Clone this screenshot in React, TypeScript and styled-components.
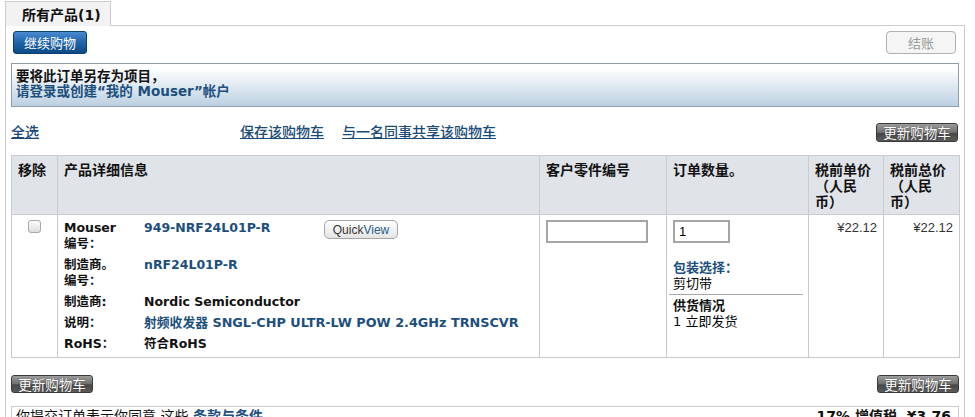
import styled, { createGlobalStyle } from 'styled-components'

const GlobalStyle = createGlobalStyle`
	* {
		box-sizing: border-box;
	}
	html,
	body {
		margin: 0;
		padding: 0;
		background: #fff;
	}
	body {
		font-family: 'DejaVu Sans', 'Noto Sans CJK SC', sans-serif;
		color: #000;
	}
`

const details = [
	{ label: <>Mouser<br />编号：</>, value: '949-NRF24L01P-R', link: true, quick: true },
	{ label: <>制造商。<br />编号：</>, value: 'nRF24L01P-R', link: true },
	{ label: '制造商:', value: 'Nordic Semiconductor' },
	{ label: '说明：', value: '射频收发器 SNGL-CHP ULTR-LW POW 2.4GHz TRNSCVR', link: true, wide: true },
	{ label: 'RoHS：', value: '符合RoHS', wide: true },
]

export default function App() {
	return (
		<Page>
			<GlobalStyle />
			<Tabs>
				<Tab>所有产品(1)</Tab>
				<TabRest />
			</Tabs>

			<Panel>
				<TopBar>
					<BlueButton type="button">继续购物</BlueButton>
					<CheckoutButton type="button">结账</CheckoutButton>
				</TopBar>

				<Notice>
					<div>要将此订单另存为项目，</div>
					<NoticeLink>请登录或创建“我的 Mouser”帐户</NoticeLink>
				</Notice>

				<ActionRow>
					<SelectAll>全选</SelectAll>
					<TextLink>保存该购物车</TextLink>
					<TextLink>与一名同事共享该购物车</TextLink>
					<Spacer />
					<UpdateButton type="button">更新购物车</UpdateButton>
				</ActionRow>

				<CartTable>
					<colgroup>
						<col style={{ width: 46 }} />
						<col style={{ width: 482 }} />
						<col style={{ width: 127 }} />
						<col style={{ width: 142 }} />
						<col style={{ width: 75 }} />
						<col style={{ width: 76 }} />
					</colgroup>
					<thead>
						<tr>
							<Th>移除</Th>
							<Th>产品详细信息</Th>
							<Th>客户零件编号</Th>
							<Th>订单数量。</Th>
							<Th $narrow>税前单价（人民币）</Th>
							<Th $narrow>税前总价（人民币）</Th>
						</tr>
					</thead>
					<tbody>
						<tr>
							<Td $center>
								<CheckBox type="checkbox" />
							</Td>
							<Td>
								<DetailGrid>
									{details.map((d, i) => (
										<DetailRow key={i}>
											<DetailLabel>{d.label}</DetailLabel>
											<DetailValue $link={!!d.link} $wide={!!d.wide}>
												{d.value}
											</DetailValue>
											{d.quick && (
												<div>
													<QuickView type="button">
														Quick<span>View</span>
													</QuickView>
												</div>
											)}
										</DetailRow>
									))}
								</DetailGrid>
							</Td>
							<Td>
								<PartInput />
							</Td>
							<Td>
								<QtyInput defaultValue="1" />
								<PackTitle>包装选择：</PackTitle>
								<Plain>剪切带</Plain>
								<Divider />
								<StockTitle>供货情况</StockTitle>
								<Plain>1 立即发货</Plain>
							</Td>
							<Td $price>¥22.12</Td>
							<Td $price>¥22.12</Td>
						</tr>
					</tbody>
				</CartTable>

				<BottomBar>
					<UpdateButton type="button" $small>
						更新购物车
					</UpdateButton>
					<UpdateButton type="button" $small>
						更新购物车
					</UpdateButton>
				</BottomBar>

				<Terms>
					<span>
						你提交订单表示你同意 这些 <TermsLink>条款与条件</TermsLink>
					</span>
					<Tax>17% 增值税 &nbsp;¥3.76</Tax>
				</Terms>
			</Panel>
		</Page>
	)
}

const Page = styled.div`
	width: 975px;
	padding: 1px 10px 0 5px;
`

const Tabs = styled.div`
	display: flex;
	height: 25px;
`

const Tab = styled.div`
	width: 106px;
	height: 25px;
	padding-left: 16px;
	background: #f2f2f2;
	border: 1px solid #cccccc;
	border-bottom: none;
	font-size: 14px;
	font-weight: bold;
	line-height: 26px;
	color: #111;
`

const TabRest = styled.div`
	flex: 1;
	border-bottom: 1px solid #cccccc;
`

const Panel = styled.div`
	width: 960px;
	padding: 5px 5px 0 5px;
	border: 1px solid #cccccc;
	border-top: none;
`

const TopBar = styled.div`
	display: flex;
	justify-content: space-between;
	height: 23px;
`

const BlueButton = styled.button`
	width: 74px;
	height: 23px;
	padding: 0;
	margin-left: 2px;
	border: 1px solid #0b3e70;
	border-radius: 3px;
	background: linear-gradient(#4a8bd0, #1f63a8 50%, #0c4a86);
	color: #fff;
	font-family: 'Noto Sans CJK SC', sans-serif;
	font-size: 13px;
	line-height: 20px;
`

const CheckoutButton = styled.button`
	width: 70px;
	height: 23px;
	padding: 0;
	margin-right: 3px;
	border: 1px solid #b0b0b0;
	border-radius: 4px;
	background: #f5f5f5;
	color: #9a9a9a;
	font-family: 'Noto Sans CJK SC', sans-serif;
	font-size: 13px;
	line-height: 20px;
`

const Notice = styled.div`
	margin-top: 9px;
	height: 44px;
	padding: 5px 4px 7px;
	border: 1px solid #8e9dab;
	background: linear-gradient(#ffffff 10%, #bcd0e2);
	font-size: 13.5px;
	font-weight: bold;
	line-height: 15px;
	color: #111;
`

const NoticeLink = styled.div`
	color: #1d4f7d;
`

const ActionRow = styled.div`
	display: flex;
	align-items: center;
	margin-top: 16px;
	height: 19px;
`

const TextLink = styled.a`
	margin-right: 18px;
	font-size: 14px;
	font-weight: 500;
	line-height: 19px;
	color: #1a4a78;
	text-decoration: underline;
	cursor: pointer;
`

const SelectAll = styled(TextLink)`
	width: 229px;
	margin-right: 0;
`

const Spacer = styled.div`
	flex: 1;
`

const UpdateButton = styled.button<{ $small?: boolean }>`
	width: 82px;
	height: ${({ $small }) => ($small ? '18px' : '19px')};
	padding: 0;
	margin-right: ${({ $small }) => ($small ? '0' : '1px')};
	border: 1px solid #3a3a3a;
	border-radius: 3px;
	background: linear-gradient(#9c9c9c, #6e6e6e 50%, #474747 55%, #5a5a5a);
	color: #fff;
	font-family: 'Noto Sans CJK SC', sans-serif;
	font-size: 13.5px;
	line-height: 15px;
	text-shadow: 0 0 1px #333;
`

const CartTable = styled.table`
	margin-top: 13px;
	width: 948px;
	table-layout: fixed;
	border-collapse: collapse;
	border: 1px solid #c9c9c9;
`

const Th = styled.th<{ $narrow?: boolean }>`
	padding: ${({ $narrow }) => ($narrow ? '6px 11px 4px 6px' : '6px 6px 4px')};
	background: #e0e3e8;
	border: 1px solid #c9ccd1;
	text-align: left;
	vertical-align: top;
	font-size: 14px;
	font-weight: bold;
	line-height: 16px;
	color: #111;
`

const Td = styled.td<{ $center?: boolean; $price?: boolean }>`
	padding: 5px 6px 5px;
	border: 1px solid #c9c9c9;
	vertical-align: top;
	text-align: ${({ $center, $price }) => ($center ? 'center' : $price ? 'right' : 'left')};
	font-family: ${({ $price }) => ($price ? "'Liberation Sans', sans-serif" : 'inherit')};
	font-size: 13px;
	line-height: 16px;
	color: ${({ $price }) => ($price ? '#333' : '#000')};
`

const CheckBox = styled.input`
	appearance: none;
	display: block;
	width: 13px;
	height: 13px;
	margin: 0 auto;
	border: 1px solid #a8a8a8;
	border-radius: 3px;
	background: linear-gradient(#fdfdfd, #dcdcdc);
`

const DetailGrid = styled.div`
	display: flex;
	flex-direction: column;
	gap: 5px;
`

const DetailRow = styled.div`
	display: grid;
	grid-template-columns: 80px 180px 1fr;
	align-items: start;
	font-size: 12.5px;
	font-weight: bold;
	line-height: 16px;
`

const DetailLabel = styled.div`
	color: #111;
`

const DetailValue = styled.div<{ $link: boolean; $wide: boolean }>`
	grid-column: ${({ $wide }) => ($wide ? 'span 2' : 'auto')};
	color: ${({ $link }) => ($link ? '#1d4f7d' : '#111')};
	font-size: ${({ $wide, $link }) => ($wide && $link ? '12.8px' : '12.5px')};
	white-space: nowrap;
`

const QuickView = styled.button`
	width: 74px;
	height: 19px;
	padding: 0;
	border: 1px solid #a6a6a6;
	border-radius: 5px;
	background: linear-gradient(#ffffff, #e4e4e4);
	font-family: 'Liberation Sans', sans-serif;
	font-size: 12px;
	line-height: 16px;
	color: #333;

	span {
		color: #2b5c8a;
	}
`

const PartInput = styled.input`
	display: block;
	width: 102px;
	height: 23px;
	border: 2px solid #a5a5a5;
	background: #fff;
`

const QtyInput = styled.input`
	display: block;
	width: 57px;
	height: 23px;
	padding: 0 4px;
	border: 2px solid #a5a5a5;
	background: #fff;
	font-family: 'Liberation Sans', sans-serif;
	font-size: 13px;
	color: #000;
	-webkit-text-fill-color: #000;
	caret-color: transparent;
`

const PackTitle = styled.div`
	margin-top: 17px;
	font-weight: bold;
	color: #1d4f7d;
`

const Plain = styled.div`
	font-weight: normal;
	color: #000;
`

const Divider = styled.div`
	margin: 2px 0 0 -4px;
	width: 134px;
	height: 1px;
	background: #a8a8a8;
`

const StockTitle = styled.div`
	margin-top: 3px;
	font-weight: bold;
	color: #111;
`

const BottomBar = styled.div`
	display: flex;
	justify-content: space-between;
	margin-top: 17px;
`

const Terms = styled.div`
	display: flex;
	justify-content: space-between;
	margin-top: 13px;
	padding: 1px 7px 4px 4px;
	border: 1px solid #cccccc;
	font-size: 14px;
	line-height: 16px;
	color: #111;
`

const TermsLink = styled.a`
	font-weight: bold;
	color: #1d4f7d;
`

const Tax = styled.span`
	font-weight: bold;
`
